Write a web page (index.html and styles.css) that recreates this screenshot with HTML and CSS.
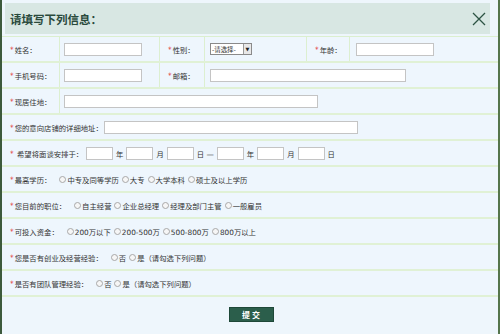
FILE: index.html
```html
<!DOCTYPE html>
<html lang="zh-CN">

<head>
    <meta charset="UTF-8">
    <meta name="viewport" content="width=device-width, initial-scale=1.0">
    <title>请填写下列信息</title>
    <link rel="stylesheet" href="styles.css">
</head>

<body>
    <div class="dialog">
        <div class="dialog-header">
            <h2>请填写下列信息：</h2>
            <button class="close-button">
                <svg width="14" height="14" viewBox="0 0 14 14">
                    <path d="M1 1 L13 13 M13 1 L1 13" stroke="#2d5444" stroke-width="1.3" fill="none" />
                </svg>
            </button>
        </div>

        <div class="form-table">
            <div class="row">
                <div class="cell label c1"><i>*</i>姓名：</div>
                <div class="cell c2"><input type="text" class="w78"></div>
                <div class="cell label c3"><i>*</i>性别：</div>
                <div class="cell c4">
                    <span class="fake-select">-请选择-<b>&#9660;</b></span>
                </div>
                <div class="cell label c5"><i>*</i>年龄：</div>
                <div class="cell c6"><input type="text" class="w78"></div>
            </div>
            <div class="row">
                <div class="cell label c1"><i>*</i>手机号码：</div>
                <div class="cell c2"><input type="text" class="w78"></div>
                <div class="cell label c3"><i>*</i>邮箱：</div>
                <div class="cell c4 span"><input type="text" class="w196"></div>
            </div>
            <div class="row">
                <div class="cell label c1"><i>*</i>现居住地：</div>
                <div class="cell c2 span"><input type="text" class="w254"></div>
            </div>
            <div class="row">
                <div class="cell single"><i>*</i>您的意向店铺的详细地址：<input type="text" class="w254 ml1"></div>
            </div>
            <div class="row">
                <div class="cell single"><i>*</i>&nbsp;希望将面谈安排于：
                    <input type="text" class="w27 first"><em>年</em><input type="text" class="w27"><em>月</em><input type="text" class="w27"><em>日 —</em><input type="text" class="w27"><em>年</em><input type="text" class="w27"><em>月</em><input type="text" class="w27"><em>日</em>
                </div>
            </div>
            <div class="row">
                <div class="cell single radios"><i>*</i>最高学历：
                    <span class="opt first"><span class="radio"></span>中专及同等学历</span>
                    <span class="opt"><span class="radio"></span>大专</span>
                    <span class="opt"><span class="radio"></span>大学本科</span>
                    <span class="opt"><span class="radio"></span>硕士及以上学历</span>
                </div>
            </div>
            <div class="row">
                <div class="cell single radios"><i>*</i>您目前的职位：
                    <span class="opt first"><span class="radio"></span>自主经营</span>
                    <span class="opt"><span class="radio"></span>企业总经理</span>
                    <span class="opt"><span class="radio"></span>经理及部门主管</span>
                    <span class="opt"><span class="radio"></span>一般雇员</span>
                </div>
            </div>
            <div class="row">
                <div class="cell single radios"><i>*</i>可投入资金：
                    <span class="opt first"><span class="radio"></span>200万以下</span>
                    <span class="opt"><span class="radio"></span>200-500万</span>
                    <span class="opt"><span class="radio"></span>500-800万</span>
                    <span class="opt"><span class="radio"></span>800万以上</span>
                </div>
            </div>
            <div class="row">
                <div class="cell single radios"><i>*</i>您是否有创业及经营经验：
                    <span class="opt first"><span class="radio"></span>否</span>
                    <span class="opt"><span class="radio"></span>是（请勾选下列问题）</span>
                </div>
            </div>
            <div class="row">
                <div class="cell single radios"><i>*</i>是否有团队管理经验：
                    <span class="opt first"><span class="radio"></span>否</span>
                    <span class="opt"><span class="radio"></span>是（请勾选下列问题）</span>
                </div>
            </div>
        </div>

        <div class="actions">
            <button class="submit">提 交</button>
        </div>
    </div>
</body>

</html>
```

FILE: styles.css
```css
* {
    margin: 0;
    padding: 0;
    box-sizing: border-box;
}

body {
    font-family: "DejaVu Sans", "Noto Sans CJK SC", sans-serif;
    background-color: #eef6fc;
    color: #333;
    width: 500px;
    height: 334px;
    overflow: hidden;
}

.dialog {
    height: 334px;
    border-left: 2px solid #3d5a3c;
    border-right: 2px solid #55754c;
    background-color: #eef6fc;
    padding-top: 3px;
}

.dialog-header {
    height: 31px;
    margin: 0 8px 0 3px;
    background-color: #d8e7e3;
    display: flex;
    align-items: center;
    justify-content: space-between;
    padding: 0 4px 0 5px;
}

.dialog-header h2 {
    font-family: "Noto Sans CJK SC", sans-serif;
    font-size: 11.5px;
    font-weight: bold;
    color: #2a4a3c;
}

.close-button {
    background: transparent;
    border: none;
    width: 14px;
    height: 14px;
    display: flex;
    cursor: pointer;
}

.form-table {
    margin-top: 2px;
    border-top: 1px solid #dbefcf;
}

.row {
    height: 26px;
    display: flex;
    border-bottom: 2px solid #e0f1d5;
    background-color: #eef6fd;
}

.cell {
    display: flex;
    align-items: center;
    font-size: 7.35px;
    white-space: nowrap;
}

.label {
    padding-left: 8px;
}

.c1 {
    width: 58px;
    border-right: 1px solid #dcefd0;
}

.c2 {
    width: 100px;
    padding-left: 4px;
    border-right: 1px solid #dcefd0;
}

.c3 {
    width: 45px;
    border-right: 1px solid #dcefd0;
}

.c4 {
    width: 102px;
    padding-left: 5px;
    border-right: 1px solid #dcefd0;
}

.c5 {
    width: 43px;
    border-right: 1px solid #dcefd0;
}

.c6 {
    flex: 1;
    padding-left: 6px;
}

.span {
    flex: 1;
    border-right: none;
}

.single {
    flex: 1;
    padding-left: 8px;
}

.cell i {
    font-style: normal;
    color: #e0222a;
    margin-right: 1px;
}

.cell input {
    height: 13px;
    border: 1px solid #c4c4c4;
    background-color: #fff;
    outline: none;
}

.w78 {
    width: 78px;
}

.w196 {
    width: 196px;
}

.w254 {
    width: 254px;
}

.w27 {
    width: 27px;
}

.ml1 {
    margin-left: 1px;
}

.first {
    margin-left: 3px;
}

.cell em {
    font-style: normal;
    margin: 0 3px;
}

.fake-select {
    display: flex;
    align-items: center;
    height: 12px;
    width: 42px;
    border: 1px solid #8a8a8a;
    background-color: #fff;
    padding-left: 1px;
    font-size: 6.4px;
    justify-content: space-between;
}

.fake-select b {
    font-size: 5px;
    width: 8px;
    height: 10px;
    border-left: 1px solid #999;
    background-color: #e8e8e8;
    display: flex;
    align-items: center;
    justify-content: center;
    color: #222;
}

.opt {
    display: inline-flex;
    align-items: center;
    margin-right: 3px;
}

.opt.first {
    margin-left: 8px;
}

.radio {
    width: 7px;
    height: 7px;
    border-radius: 50%;
    border: 1px solid #a8a8a8;
    background-color: #f6f6f6;
    margin-right: 1px;
}

.actions {
    display: flex;
    justify-content: center;
    padding-top: 10px;
    padding-left: 2px;
}

.submit {
    width: 45px;
    height: 15px;
    background-color: #2b5e4b;
    border: 1px solid #1e4838;
    color: #fff;
    font-family: "Noto Sans CJK SC", sans-serif;
    font-size: 8px;
    font-weight: bold;
    cursor: pointer;
}
```
